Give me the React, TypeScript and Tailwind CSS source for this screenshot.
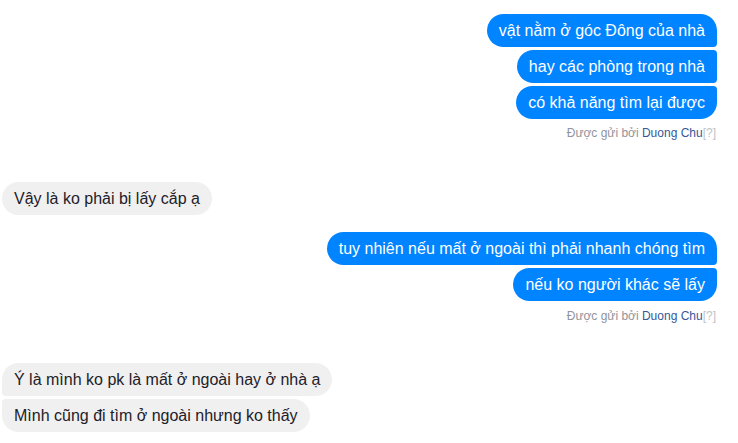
const Bubble = (props: { text: string; mine?: boolean; pos: "single" | "first" | "middle" | "last" }) => {
  const mineRadius = {
    single: "rounded-[18px]",
    first: "rounded-[18px] rounded-br-[4px]",
    middle: "rounded-[18px] rounded-r-[4px]",
    last: "rounded-[18px] rounded-tr-[4px]",
  };
  const theirRadius = {
    single: "rounded-[18px]",
    first: "rounded-[18px] rounded-bl-[4px]",
    middle: "rounded-[18px] rounded-l-[4px]",
    last: "rounded-[18px] rounded-tl-[4px]",
  };
  return (
    <div
      className={
        "px-3 py-[7px] text-[16px] leading-[19px] whitespace-nowrap " +
        (props.mine
          ? "bg-[#0084ff] text-white " + mineRadius[props.pos]
          : "bg-[#f1f0f0] text-[#1d2129] " + theirRadius[props.pos])
      }
    >
      {props.text}
    </div>
  );
};

const SentBy = () => (
  <p className="text-[12px] leading-4 text-[#90949c] text-right pr-[22px]">
    Được gửi bởi <span className="text-[#365899]">Duong Chu</span>
    <span className="text-[#bec3c9]">[?]</span>
  </p>
);

export default function App() {
  return (
    <div
      className="w-[738px] h-[443px] bg-white overflow-hidden pt-[14px]"
      style={{ fontFamily: '"Liberation Sans", Arial, sans-serif' }}
    >
      <div className="flex flex-col items-end gap-[3px] pr-[21px]">
        <Bubble mine pos="first" text="vật nằm ở góc Đông của nhà" />
        <Bubble mine pos="middle" text="hay các phòng trong nhà" />
        <Bubble mine pos="last" text="có khả năng tìm lại được" />
      </div>
      <div className="mt-[6px]">
        <SentBy />
      </div>

      <div className="flex flex-col items-start pl-[2px] mt-[41px]">
        <Bubble pos="single" text="Vậy là ko phải bị lấy cắp ạ" />
      </div>

      <div className="flex flex-col items-end gap-[3px] pr-[21px] mt-[17px]">
        <Bubble mine pos="first" text="tuy nhiên nếu mất ở ngoài thì phải nhanh chóng tìm" />
        <Bubble mine pos="last" text="nếu ko người khác sẽ lấy" />
      </div>
      <div className="mt-[7px]">
        <SentBy />
      </div>

      <div className="flex flex-col items-start gap-[3px] pl-[2px] mt-[39px]">
        <Bubble pos="first" text="Ý là mình ko pk là mất ở ngoài hay ở nhà ạ" />
        <Bubble pos="last" text="Mình cũng đi tìm ở ngoài nhưng ko thấy" />
      </div>
    </div>
  );
}
